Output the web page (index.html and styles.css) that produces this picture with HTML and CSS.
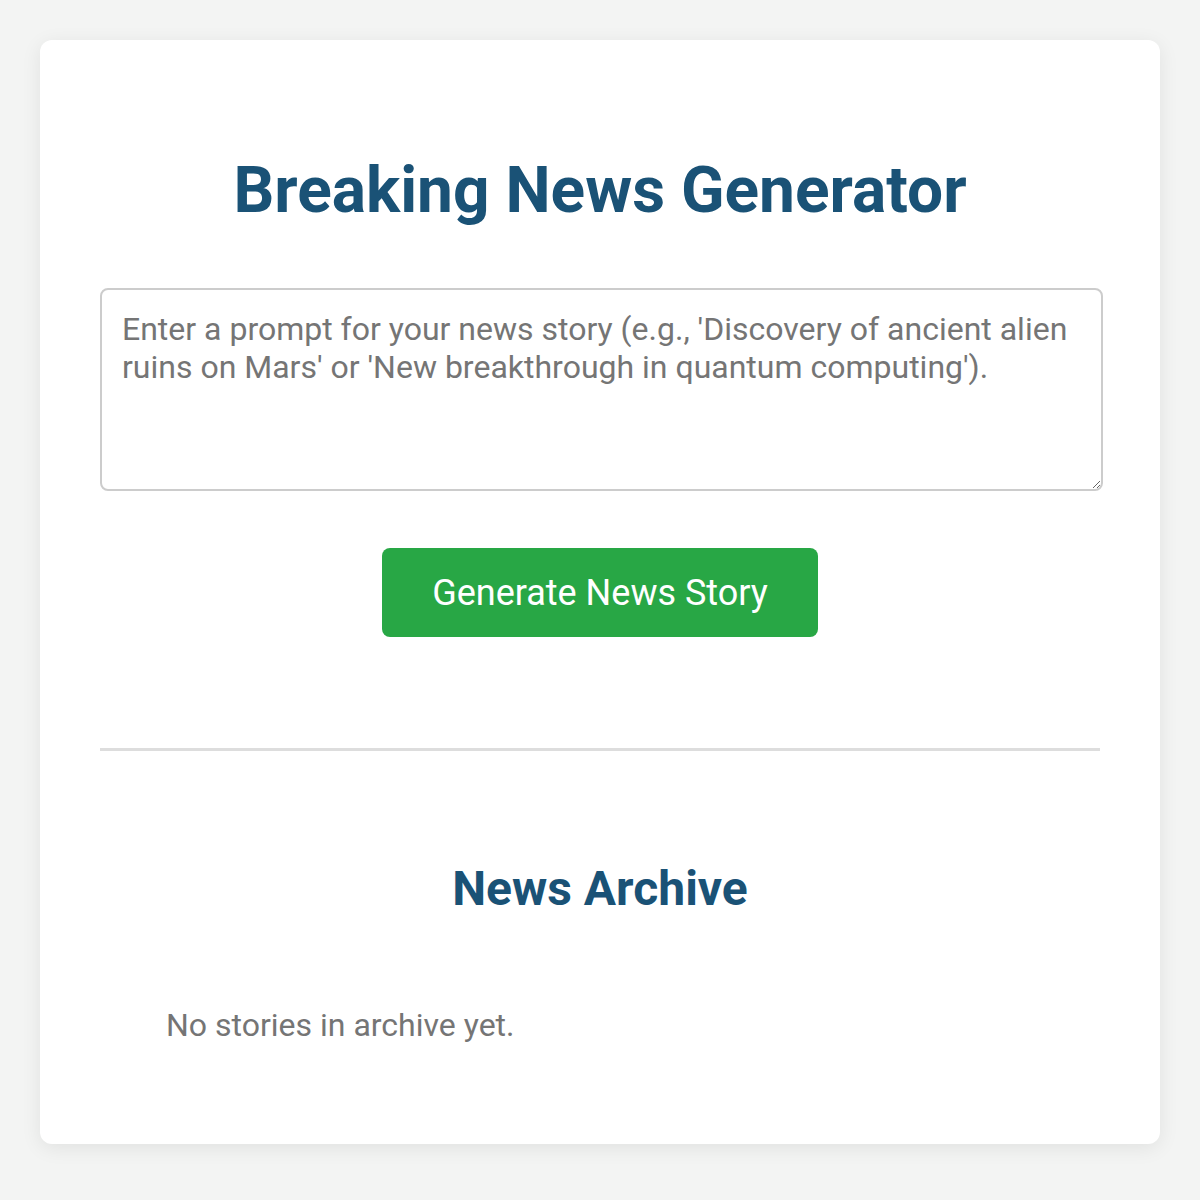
FILE: index.html
```html
<!DOCTYPE html>
<html lang="en">
<head>
  <meta charset="UTF-8">
  <meta name="viewport" content="width=device-width, initial-scale=1.0">
  <title>Breaking News Generator</title>
  <link rel="stylesheet" href="styles.css">
</head>
<body>
  <div class="container">
    <h1>Breaking News Generator</h1>

    <textarea id="prompt" placeholder="Enter a prompt for your news story (e.g., 'Discovery of ancient alien ruins on Mars' or 'New breakthrough in quantum computing')."></textarea>

    <div class="actions">
      <button id="generate-btn">Generate News Story</button>
    </div>

    <hr class="divider">

    <h2>News Archive</h2>
    <ul id="archive-list">
      <li class="empty">No stories in archive yet.</li>
    </ul>
  </div>
</body>
</html>
```

FILE: styles.css
```css
body {
  margin: 0;
  padding: 40px;
  background-color: #f3f4f3;
  font-family: Roboto, 'Liberation Sans', sans-serif;
  color: #333;
}
.container {
  background-color: #fff;
  border-radius: 12px;
  box-shadow: 0 4px 20px rgba(0, 0, 0, 0.08);
  padding: 60px;
}
h1 {
  color: #1a5276;
  font-size: 64px;
  text-align: center;
  margin: 53px 0 60px;
}
textarea {
  display: block;
  box-sizing: border-box;
  width: calc(100% + 3px);
  height: 203px;
  padding: 20px;
  font-family: inherit;
  font-size: 32px;
  color: #333;
  border: 2px solid #ccc;
  border-radius: 8px;
}
textarea::placeholder {
  color: #757575;
}
.actions {
  text-align: center;
  margin-top: 57px;
}
#generate-btn {
  background-color: #28a745;
  color: #fff;
  border: none;
  border-radius: 8px;
  padding: 0 50px;
  height: 89px;
  font-family: inherit;
  font-size: 36px;
  cursor: pointer;
  vertical-align: top;
}
.divider {
  border: none;
  border-top: 3px solid #ddd;
  margin: 111px 0 0;
}
h2 {
  color: #1a5276;
  font-size: 48px;
  text-align: center;
  margin: 109px 0 0;
}
#archive-list {
  list-style: none;
  padding: 0 0 0 66px;
  margin: 89px 0 40px;
}
.empty {
  color: #757575;
  font-size: 32px;
}
```
